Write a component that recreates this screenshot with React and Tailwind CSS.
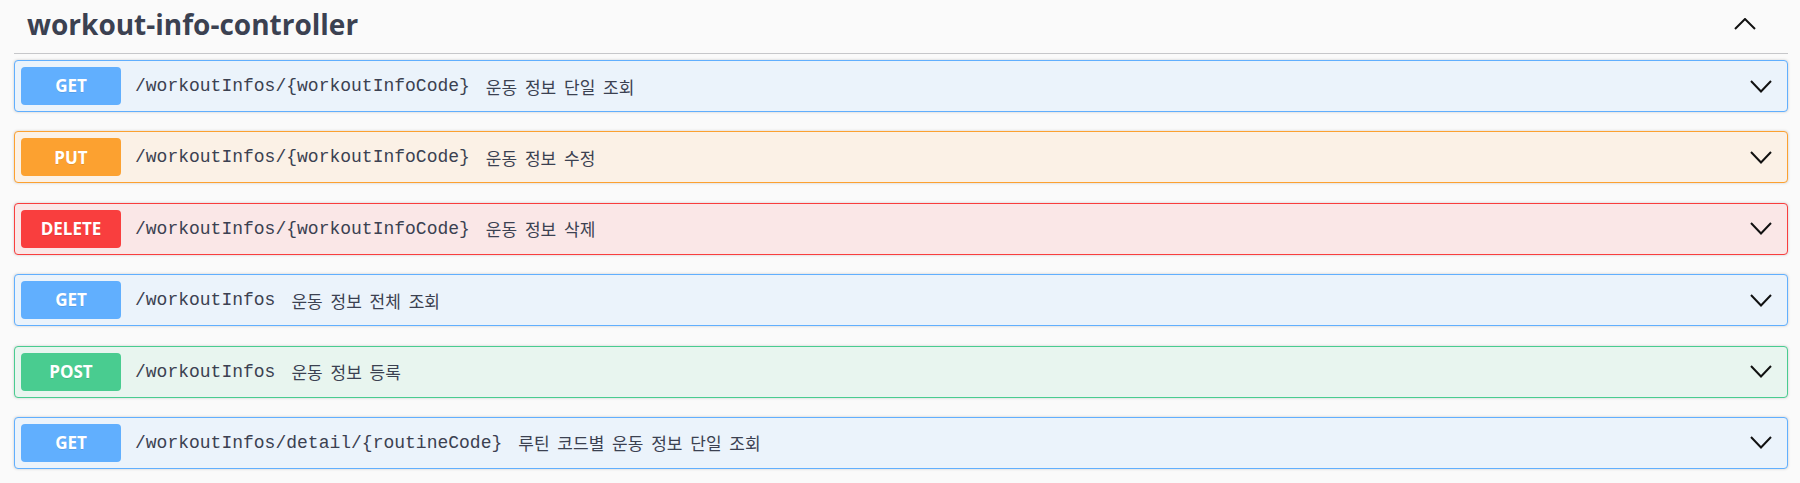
import React from "react";

const ops = [
  { m: "GET", path: "/workoutInfos/{workoutInfoCode}", desc: "운동 정보 단일 조회", badge: "bg-[#61affe]", box: "bg-[#ebf3fb] border-[#61affe]" },
  { m: "PUT", path: "/workoutInfos/{workoutInfoCode}", desc: "운동 정보 수정", badge: "bg-[#fca130]", box: "bg-[#fbf1e6] border-[#fca130]" },
  { m: "DELETE", path: "/workoutInfos/{workoutInfoCode}", desc: "운동 정보 삭제", badge: "bg-[#f93e3e]", box: "bg-[#fae7e7] border-[#f93e3e]" },
  { m: "GET", path: "/workoutInfos", desc: "운동 정보 전체 조회", badge: "bg-[#61affe]", box: "bg-[#ebf3fb] border-[#61affe]" },
  { m: "POST", path: "/workoutInfos", desc: "운동 정보 등록", badge: "bg-[#49cc90]", box: "bg-[#e8f5ef] border-[#49cc90]" },
  { m: "GET", path: "/workoutInfos/detail/{routineCode}", desc: "루틴 코드별 운동 정보 단일 조회", badge: "bg-[#61affe]", box: "bg-[#ebf3fb] border-[#61affe]" },
];

function ChevronDown() {
  return (
    <svg width="22" height="13" viewBox="0 0 22 13" className="block">
      <polyline points="1,1 11,11.5 21,1" fill="none" stroke="#111" strokeWidth="2" />
    </svg>
  );
}

function ChevronUp() {
  return (
    <svg width="22" height="12" viewBox="0 0 22 12" className="block">
      <polyline points="1,11 11,1 21,11" fill="none" stroke="#111" strokeWidth="2" />
    </svg>
  );
}

export default function App() {
  return (
    <div className="min-h-[483px] bg-[#fafafa] pl-[14px] pr-[12px]">
      <div className="flex h-[54px] items-center justify-between border-b border-[#c6c7ca] pl-[13px] pr-[32px]">
        <h3 className="pb-[6px] text-[28px] font-bold leading-none text-[#3b4151] [font-family:'Open_Sans','Noto_Sans',sans-serif]">
          workout-info-controller
        </h3>
        <div className="pb-[6px]">
          <ChevronUp />
        </div>
      </div>
      <div className="mt-[6px] flex flex-col gap-[19.4px]">
        {ops.map((o, i) => (
          <div
            key={i}
            className={`flex h-[52px] items-center rounded-[4px] border px-[6px] shadow-[0_0_3px_rgba(0,0,0,0.19)] ${o.box}`}
          >
            <div
              className={`flex h-[38px] w-[100px] shrink-0 items-center justify-center rounded-[4px] text-[17px] font-bold text-white [text-shadow:0_1px_0_rgba(0,0,0,0.1)] [font-family:'Open_Sans','Noto_Sans',sans-serif] ${o.badge}`}
            >
              {o.m}
            </div>
            <span className="ml-[14px] text-[18px] leading-none text-[#3b4151] [font-family:'Liberation_Mono','Noto_Sans_CJK_KR',monospace]">
              {o.path}
            </span>
            <span className="ml-[16px] text-[17px] leading-none text-[#3b4151] [word-spacing:4px] [font-family:'Noto_Sans_CJK_KR',sans-serif]">
              {o.desc}
            </span>
            <div className="ml-auto pr-[9px]">
              <ChevronDown />
            </div>
          </div>
        ))}
      </div>
    </div>
  );
}
